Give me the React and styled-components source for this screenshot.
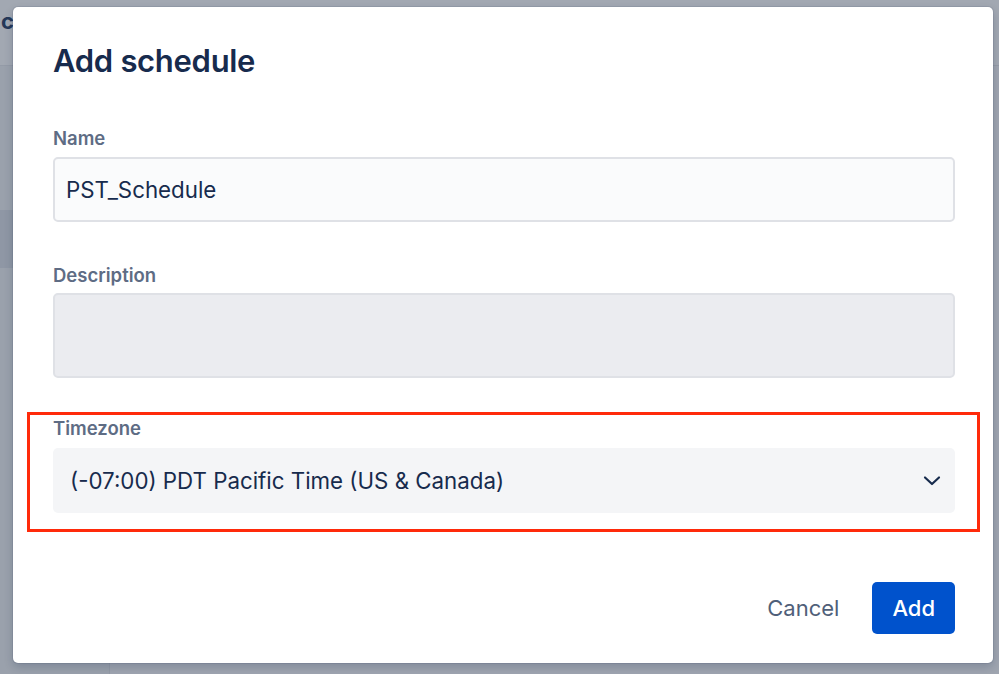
import React from "react";
import styled, { createGlobalStyle } from "styled-components";

const GlobalStyle = createGlobalStyle`
  html, body { margin: 0; padding: 0; }
  body {
    font-family: Inter, "Noto Sans", "Liberation Sans", sans-serif;
    -webkit-font-smoothing: antialiased;
  }
  * { box-sizing: border-box; }
`;

const Page = styled.div`
  position: relative;
  width: 999px;
  height: 674px;
  overflow: hidden;
  display: grid;
  grid-template-rows: 66px 1fr;
  background: #9ea4af;
`;

const Header = styled.header`
  background: #a2a8b2;
  border-bottom: 1px solid #949ba7;
  padding: 8px 0 0 1px;
`;

const HeaderTitle = styled.span`
  display: inline-block;
  font-size: 22px;
  font-weight: 700;
  line-height: 26px;
  color: #253858;
`;

const Body = styled.div`
  display: grid;
  grid-template-columns: 110px 1fr;
`;

const Sidebar = styled.nav`
  background: #9aa1ac;
  border-right: 1px solid #939aa6;
  padding-top: 144px;
`;

const NavItem = styled.div`
  height: 58px;
  background: ${(p) => (p.$active ? "#8f97a5" : "transparent")};
`;

const Content = styled.main`
  background: #9fa5b0;
`;

const Modal = styled.div`
  position: absolute;
  left: 13px;
  top: 7px;
  width: 980px;
  height: 656px;
  background: #ffffff;
  border-radius: 5px;
  box-shadow: 0 0 0 1px rgba(9, 30, 66, 0.08), 0 4px 10px rgba(9, 30, 66, 0.2);
  padding: 36px 38px 29px 40px;
  display: flex;
  flex-direction: column;
`;

const Title = styled.h1`
  margin: 0;
  font-size: 31px;
  line-height: 36px;
  font-weight: 600;
  color: #172b4d;
  letter-spacing: -0.3px;
`;

const Field = styled.div`
  display: flex;
  flex-direction: column;
  margin-top: ${(p) => p.$top || 0}px;
`;

const Label = styled.label`
  font-size: 18.5px;
  line-height: 24px;
  font-weight: 600;
  color: #5e6c84;
  margin-bottom: ${(p) => p.$gap || 7}px;
`;

const TextInput = styled.div`
  height: 65px;
  display: flex;
  align-items: center;
  padding: 0 11px;
  border: 2px solid #dfe1e6;
  border-radius: 5px;
  background: #fafbfc;
  font-size: 22.3px;
  color: #172b4d;
`;

const TextArea = styled.div`
  height: 85px;
  border: 2px solid #dfe1e6;
  border-radius: 5px;
  background: #ebecf0;
`;

const Highlight = styled.div`
  margin: 34px -25px 0 -26px;
  padding: 1px 22px 16px 23px;
  border: 3px solid #ff2a0a;
`;

const Select = styled.div`
  height: 65px;
  display: flex;
  align-items: center;
  justify-content: space-between;
  padding: 0 14px 0 17px;
  border-radius: 5px;
  background: #f4f5f7;
  font-size: 22.3px;
  color: #172b4d;
`;

const Chevron = styled.svg`
  width: 18px;
  height: 18px;
  flex-shrink: 0;
`;

const Footer = styled.div`
  margin-top: auto;
  display: flex;
  justify-content: flex-end;
  align-items: center;
  gap: 17px;
`;

const Button = styled.button`
  height: 52px;
  padding: 0 ${(p) => (p.$primary ? 20 : 16)}px;
  border: none;
  border-radius: 5px;
  font-family: inherit;
  font-size: 22px;
  font-weight: ${(p) => (p.$primary ? 500 : 400)};
  background: ${(p) => (p.$primary ? "#0052cc" : "transparent")};
  color: ${(p) => (p.$primary ? "#ffffff" : "#505f79")};
  cursor: pointer;
`;

export default function App() {
  return (
    <>
      <GlobalStyle />
      <Page>
        <Header>
          <HeaderTitle>c</HeaderTitle>
        </Header>
        <Body>
          <Sidebar>
            <NavItem $active />
          </Sidebar>
          <Content />
        </Body>
        <Modal>
          <Title>Add schedule</Title>
          <Field $top={47}>
            <Label>Name</Label>
            <TextInput>PST_Schedule</TextInput>
          </Field>
          <Field $top={41}>
            <Label $gap={6}>Description</Label>
            <TextArea />
          </Field>
          <Highlight>
            <Field>
              <Label $gap={8}>Timezone</Label>
              <Select>
                <span>(-07:00) PDT Pacific Time (US &amp; Canada)</span>
                <Chevron viewBox="0 0 18 18" fill="none">
                  <path
                    d="M2 5.5 L9 12 L16 5.5"
                    stroke="#172b4d"
                    strokeWidth="2.2"
                    strokeLinecap="round"
                    strokeLinejoin="round"
                  />
                </Chevron>
              </Select>
            </Field>
          </Highlight>
          <Footer>
            <Button>Cancel</Button>
            <Button $primary>Add</Button>
          </Footer>
        </Modal>
      </Page>
    </>
  );
}
